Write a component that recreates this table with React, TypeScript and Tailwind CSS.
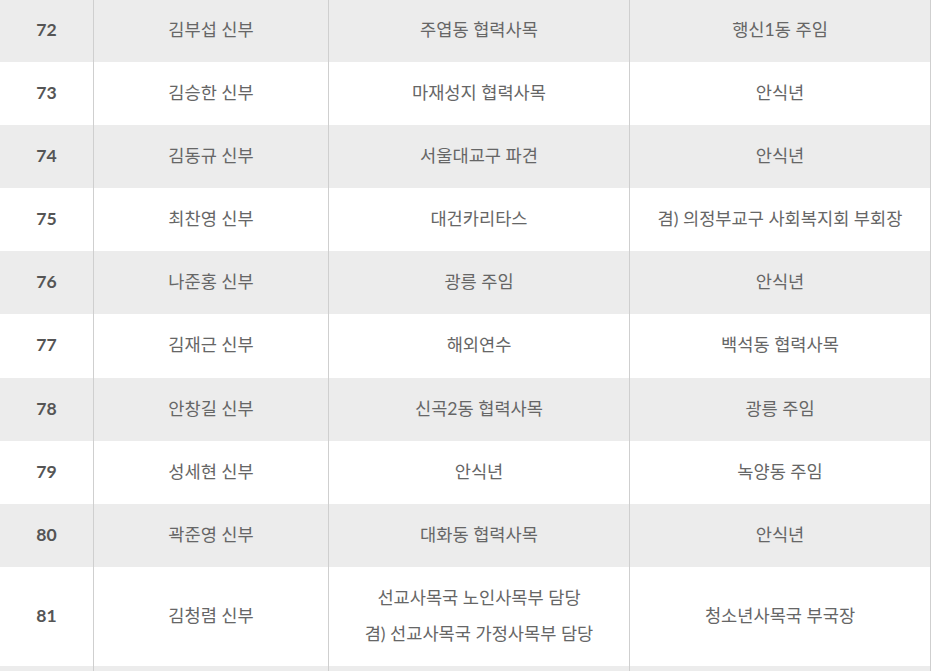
const ROWS: { no: number; name: string; post: string[]; next: string }[] = [
  { no: 72, name: "김부섭 신부", post: ["주엽동 협력사목"], next: "행신1동 주임" },
  { no: 73, name: "김승한 신부", post: ["마재성지 협력사목"], next: "안식년" },
  { no: 74, name: "김동규 신부", post: ["서울대교구 파견"], next: "안식년" },
  { no: 75, name: "최찬영 신부", post: ["대건카리타스"], next: "겸) 의정부교구 사회복지회 부회장" },
  { no: 76, name: "나준홍 신부", post: ["광릉 주임"], next: "안식년" },
  { no: 77, name: "김재근 신부", post: ["해외연수"], next: "백석동 협력사목" },
  { no: 78, name: "안창길 신부", post: ["신곡2동 협력사목"], next: "광릉 주임" },
  { no: 79, name: "성세현 신부", post: ["안식년"], next: "녹양동 주임" },
  { no: 80, name: "곽준영 신부", post: ["대화동 협력사목"], next: "안식년" },
  {
    no: 81,
    name: "김청렴 신부",
    post: ["선교사목국 노인사목부 담당", "겸) 선교사목국 가정사목부 담당"],
    next: "청소년사목국 부국장",
  },
];

const cell = "shrink-0 border-r border-[#cfcfcf] pt-[13px] pb-[14.1px] flex items-center justify-center";

export default function App() {
  return (
    <div
      className="w-[932px] h-[671px] overflow-hidden bg-white text-[17.6px] text-[#666]"
      style={{ fontFamily: 'Lato, "Noto Sans CJK KR", "Noto Sans", sans-serif' }}
    >
      <div className="mt-[-1px] w-[931px]">
        {ROWS.map((row, i) => (
          <div
            key={row.no}
            className={`flex items-stretch text-center leading-[36px] ${
              i % 2 === 0 ? "bg-[#ececec]" : "bg-white"
            }`}
          >
            <div className={`w-[94px] font-bold text-[#555] ${cell}`}>{row.no}</div>
            <div className={`w-[235px] ${cell}`}>{row.name}</div>
            <div className={`w-[301px] flex-col ${cell}`}>
              {row.post.map((p) => (
                <span key={p}>{p}</span>
              ))}
            </div>
            <div className={`w-[301px] ${cell}`}>{row.next}</div>
          </div>
        ))}
        {/* next row, only its top edge is in view */}
        <div className="flex h-[63px] bg-[#ececec]">
          <div className="w-[94px] shrink-0 border-r border-[#cfcfcf]" />
          <div className="w-[235px] shrink-0 border-r border-[#cfcfcf]" />
          <div className="w-[301px] shrink-0 border-r border-[#cfcfcf]" />
          <div className="w-[301px] shrink-0 border-r border-[#cfcfcf]" />
        </div>
      </div>
    </div>
  );
}
